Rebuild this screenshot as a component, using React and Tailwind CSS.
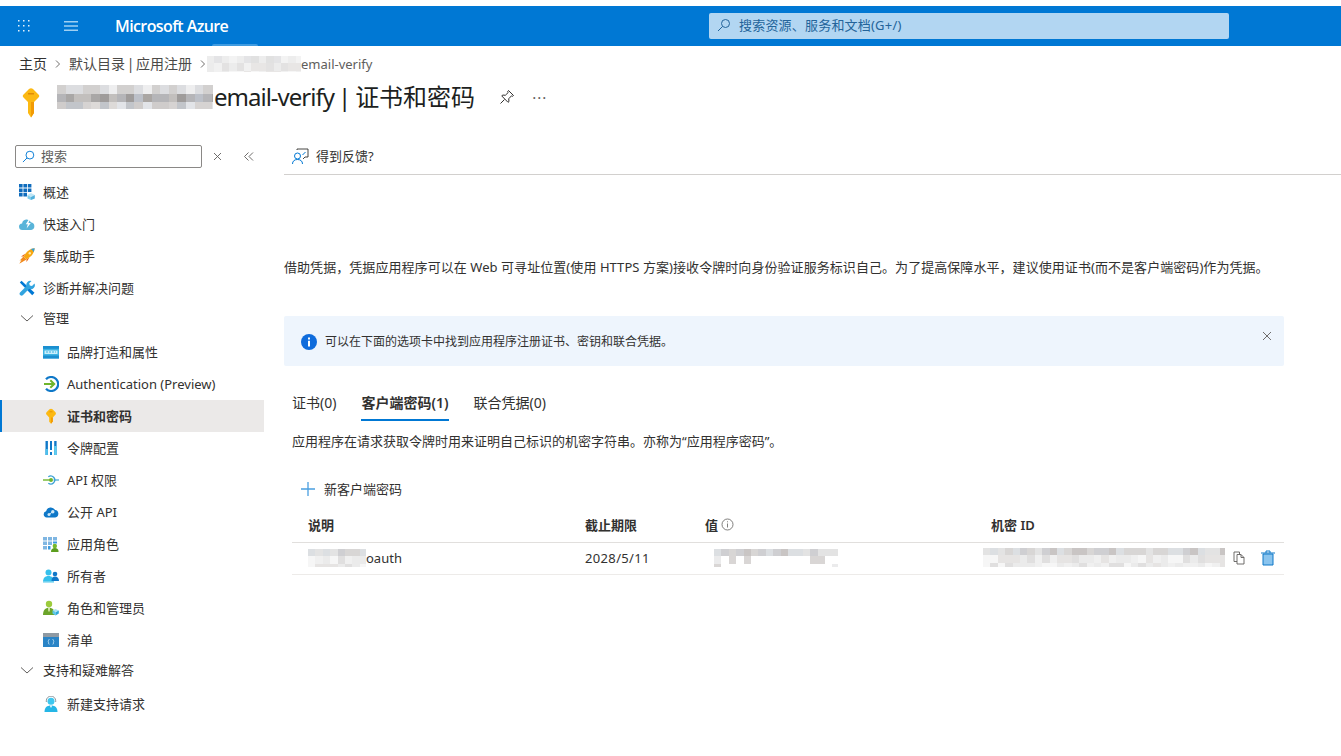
import React from "react";

const Mosaic = ({ w, h, cell = 7.4, rows, seed = 1, className = "" }) => {
  const cols = Math.ceil(w / cell);
  const nrows = Math.ceil(h / cell);
  const rects = [];
  let s = seed * 9301 + 49297;
  const next = () => {
    s = (s * 9301 + 49297) % 233280;
    return s / 233280;
  };
  for (let y = 0; y < nrows; y++) {
    const pal = rows[Math.min(y, rows.length - 1)];
    for (let x = 0; x < cols; x++) {
      rects.push(<rect key={`${x}-${y}`} x={x * cell} y={y * cell} width={cell + 0.3} height={cell + 0.3} fill={pal[Math.floor(next() * pal.length)]} />);
    }
  }
  return (
    <svg width={w} height={h} viewBox={`0 0 ${w} ${h}`} className={`shrink-0 ${className}`} shapeRendering="crispEdges">
      {rects}
    </svg>
  );
};

const light = ["#e6e6e6", "#ececec", "#dedede", "#f2f2f2", "#e2e2e4"];
const mid = ["#d8d6d5", "#cfcfd2", "#e3e3e3", "#c9c5c4", "#dcdfe2"];
const pale = ["#f0f0f0", "#e6e4e3", "#f6f6f6", "#ebebeb", "#e0dfdf"];
const dark = ["#a9a7a6", "#b5b5b8", "#9f9c9b", "#bcc0c8", "#aaa6a3", "#c2bfbd"];
const dark2 = ["#d6d3d2", "#c2c5ca", "#e2e4e8", "#cfcccb", "#dddad8"];

const Ic = ({ children, s = 16 }) => (
  <svg width={s} height={s} viewBox="0 0 16 16" className="shrink-0">{children}</svg>
);

const icons = {
  overview: (
    <Ic>
      <path d="M0 0h3.600v3.600H0zM4.400 0H8v3.600H4.400zM8.800 0h3.600v3.600H8.800zM0 4.400h3.600V8H0zM4.400 4.400H8V8H4.400zM8.800 4.400h3.600V8H8.800zM0 8.800h3.600v3.600H0zM4.400 8.800H8v3.600H4.400z" fill="#0f6cbd" />
      <path d="M8.500 11 12 9l3.800 2-3.800 2z" fill="#bfe6f6" />
      <path d="M8.500 11v3.400l3.500 1.600v-3z" fill="#7fcdec" />
      <path d="M15.800 11v3.400L12 16v-3z" fill="#50b0dc" />
    </Ic>
  ),
  quick: (
    <Ic>
      <path d="M3.600 14a3.300 3.300 0 0 1-.5-6.600A4.600 4.600 0 0 1 11.900 6.300a3.900 3.900 0 0 1 .3 7.700z" fill="#59b4d9" />
      <path d="M9.800 3.600 6.800 8.300h2l-1.200 4.200L11.800 7H9.400l1.400-3z" fill="#fff" />
    </Ic>
  ),
  rocket: (
    <Ic>
      <path d="M4.500 8.500 8 3.800C10 1.800 13 .5 15.700.3 15.500 3 14.200 6 12.200 8L7.500 11.500z" fill="#f7a711" />
      <path d="M11.500 1.100c1.400.6 2.600 1.800 3.200 3.200l1-4z" fill="#2f9ee0" />
      <path d="M2 8.500 6.500 5.500 4.500 8.500zM7.500 14 10.500 9.500 7.500 11.500z" fill="#e9620f" />
      <path d="M4.500 8.500 7.500 11.500.3 15.700 2.500 12 .5 12.800z" fill="#f28a1c" />
      <circle cx="10.800" cy="5.200" r="1.200" fill="#fde9a9" />
    </Ic>
  ),
  tools: (
    <Ic>
      <path d="M.8 2.500 2.500.8l13 12-2.300 2.500z" fill="#0078d4" />
      <path d="M15.500 3.500 13 6l-2.200-.6-.6-2.200L12.500.9a4 4 0 0 0-5 5L1 12.500A2 2 0 0 0 3.800 15.300L10.200 8.800a4 4 0 0 0 5.300-5.300z" fill="#32a4df" />
    </Ic>
  ),
  brand: (
    <Ic>
      <path d="M0 2h16v12.500H0z" fill="#3db4e3" />
      <path d="M0 2h16v2.800H0z" fill="#1a8fd0" />
      <path d="M0 11.500h16v3H0z" fill="#1a8fd0" />
      <path d="M1.500 6.500h13v3.500h-13z" fill="#c8eefb" />
      <path d="M3 8h10" stroke="#3db4e3" strokeWidth="1" strokeDasharray="2 1" />
    </Ic>
  ),
  auth: (
    <Ic>
      <path d="M3 3.300A7 7 0 1 1 3 12.700" fill="none" stroke="#0f78c8" strokeWidth="2.200" />
      <path d="M1 8h9.500" stroke="#6fb52c" strokeWidth="2" />
      <path d="M7.300 4.300 11.200 8l-3.900 3.700" fill="none" stroke="#6fb52c" strokeWidth="2" />
    </Ic>
  ),
  key: (
    <Ic>
      <path d="M6.500 1.200Q8 .2 9.500 1.200L12.500 4.200Q13.200 5.200 12.800 6.200L9.800 9.500V13.500L8 15.800 6.200 13.800V9.500L3.200 6.200Q2.800 5.200 3.500 4.200z" fill="#fcb913" />
      <path d="M8 9.500v6.300l1.800-2.300V9.500z" fill="#f29a05" />
      <path d="M6.500 3.300h3v1h-3z" fill="#e79304" />
    </Ic>
  ),
  token: (
    <Ic>
      <path d="M2.500 1h2.400v14H2.500z" fill="#0f78c8" />
      <path d="M2.500 9h2.400v6H2.500z" fill="#4fc1ec" />
      <path d="M7 1h2v9H7z" fill="#0f78c8" />
      <path d="M7 12h2v3H7z" fill="#0f78c8" />
      <path d="M11.200 1h2.400v14h-2.400z" fill="#0f78c8" />
      <path d="M11.200 6h2.400v9h-2.400z" fill="#5ed0f2" />
    </Ic>
  ),
  api: (
    <Ic>
      <path d="M0 8h7" stroke="#6fb52c" strokeWidth="1.400" />
      <path d="M10.500 8H16" stroke="#59b4d9" strokeWidth="1.400" />
      <path d="M5.300 4.800a4 4 0 1 1 0 6.400" fill="none" stroke="#3aa0d4" strokeWidth="1.300" />
      <circle cx="8" cy="8" r="2" fill="#6fb52c" />
    </Ic>
  ),
  expose: (
    <Ic>
      <path d="M3.700 13.500a3.200 3.200 0 0 1-.6-6.300A4.800 4.800 0 0 1 12 6a3.800 3.800 0 0 1 .3 7.500z" fill="#0f78c8" />
      <circle cx="6" cy="10.500" r="1.500" fill="#cfe8f7" />
      <circle cx="9.800" cy="7.700" r="1.700" fill="#cfe8f7" />
      <path d="M6 10.500l3.800-2.800" stroke="#cfe8f7" />
    </Ic>
  ),
  roles: (
    <Ic>
      <path d="M0 1h4v3.600H0zM5 1h4v3.600H5zM10 1h4v3.600h-4zM0 5.500h4v3.600H0zM5 5.500h4v3.600H5zM0 10h4v3.600H0z" fill="#7fb6e2" />
      <path d="M10 5.500h4v2h-4zM5 10h2.500v3.600H5z" fill="#3b9ade" />
      <circle cx="11.800" cy="10" r="2.200" fill="#76b82a" />
      <path d="M8 16c0-3 1.500-4 3.800-4s3.800 1 3.800 4z" fill="#5c9e1e" />
    </Ic>
  ),
  owners: (
    <Ic>
      <circle cx="5.500" cy="4.500" r="3" fill="#35c0ec" />
      <path d="M0 14c0-4 2-6 5.500-6s5.500 2 5.500 6z" fill="#35c0ec" />
      <path d="M0 13.500h11V15H0z" fill="#a6e2f5" />
      <circle cx="12" cy="6" r="2.300" fill="#0f78c8" />
      <path d="M8.500 13c0-3 1.200-4.500 3.500-4.500s4 1.500 4 4.500z" fill="#0f78c8" />
    </Ic>
  ),
  admins: (
    <Ic>
      <circle cx="6" cy="4" r="3.200" fill="#9ccb3c" />
      <path d="M0 15c0-5 2.400-7.300 6-7.300s6 2.300 6 7.300z" fill="#6ba42a" />
      <path d="M5 8h2l-.3 3.500H5.300z" fill="#d8e9b0" />
      <path d="M9.500 10.500 12.500 9l3.300 1.500-3.300 1.600z" fill="#a9e4f5" />
      <path d="M9.500 10.500v3l3 2v-3.300z" fill="#5ac8ea" />
      <path d="M15.800 10.500v3l-3.300 2v-3.300z" fill="#2ea9da" />
    </Ic>
  ),
  manifest: (
    <Ic>
      <path d="M0 1h16v4H0z" fill="#8f9aa3" />
      <path d="M0 5h16v10H0z" fill="#2a84c6" />
      <path d="M6.500 7.500c-1 0-1 .4-1 1.100v.7l-.5.500.5.500v.8c0 .7 0 1.100 1 1.100M9.500 7.500c1 0 1 .4 1 1.100v.7l.5.500-.5.500v.8c0 .7 0 1.100-1 1.100" fill="none" stroke="#cfe8f7" strokeWidth=".8" />
    </Ic>
  ),
  support: (
    <Ic>
      <path d="M1.500 16c0-4.500 2.400-6.500 6.500-6.500s6.500 2 6.500 6.500z" fill="#25b6e6" />
      <circle cx="8" cy="5.200" r="3.500" fill="#3ec7ef" />
      <path d="M3.300 6V4.800a4.700 4.700 0 0 1 9.400 0V6" fill="none" stroke="#8d979e" strokeWidth="1" />
      <path d="M6.800 9.500h2.400L8 12z" fill="#fff" />
    </Ic>
  ),
};

const Chevron = () => (
  <svg width="14" height="14" viewBox="0 0 14 14" className="shrink-0"><path d="M1 4.500 7 10l6-5.500" fill="none" stroke="#605e5c" strokeWidth="1" /></svg>
);

const Crumb = ({ className = "" }) => (
  <svg width="6" height="8" viewBox="0 0 6 8" className={`shrink-0 ${className}`}><path d="M1 .5 4.500 4 1 7.500" fill="none" stroke="#605e5c" strokeWidth=".9" /></svg>
);

const NavItem = ({ icon, label, sub, active }) => (
  <div className={`flex h-8 items-center gap-2 border-l-2 ${active ? "border-[#0078d4] bg-[#ebe9e8] font-semibold" : "border-transparent"} ${sub ? "pl-[41px]" : "pl-[17px]"}`}>
    {icons[icon]}
    <span>{label}</span>
  </div>
);

const Group = ({ label }) => (
  <div className="flex h-7 items-center gap-[9px] pl-[20px]">
    <Chevron />
    <span>{label}</span>
  </div>
);

export default function App() {
  return (
    <div className="h-[756px] w-[1341px] overflow-hidden bg-white pt-1.5 text-[13px] leading-5 text-[#323130] [font-family:'Noto_Sans','Noto_Sans_CJK_SC',sans-serif]">
      <header className="relative flex h-10 items-center bg-[#0078d4] text-white">
        <svg width="16" height="16" viewBox="0 0 16 16" className="ml-4 shrink-0" fill="#e3f1fb">
          <path d="M2 2h1.500v1.500H2zM7 2h1.500v1.500H7zM12 2h1.500v1.500H12zM2 7h1.500v1.500H2zM7 7h1.500v1.500H7zM12 7h1.500v1.500H12zM2 12h1.500v1.500H2zM7 12h1.500v1.500H7zM12 12h1.500v1.500H12z" />
        </svg>
        <svg width="16" height="12" viewBox="0 0 16 12" className="ml-[31px] shrink-0" fill="#9fd0f2">
          <path d="M1 1h14v1.400H1zM1 5.300h14v1.400H1zM1 9.600h14V11H1z" />
        </svg>
        <span className="ml-[36px] w-[594px] text-[16px] font-semibold tracking-[-0.6px] [font-family:'Open_Sans',sans-serif]">Microsoft Azure</span>
        <div className="flex h-[26px] w-[520px] items-center gap-[8px] rounded-[2px] bg-[#b2d6f2] pb-[2px] pl-2 text-[#23649a]">
          <svg width="14" height="14" viewBox="0 0 14 14" className="shrink-0"><circle cx="8.500" cy="5.500" r="4" fill="none" stroke="#23649a" /><path d="M5.500 8.500 1 13" stroke="#23649a" /></svg>
          <span className="tracking-[0.2px]">搜索资源、服务和文档(G+/)</span>
        </div>
        <div className="absolute bottom-0 left-[212px] h-[2px] w-[46px] rounded-t-sm bg-[#3f9be0]" />
      </header>

      <div className="flex h-[28px] items-end pl-[19px] text-[#4b4a48]">
        <div className="flex h-[20px] items-center">
          <span className="text-[14px] text-[#323130]">主页</span>
          <Crumb className="mx-[8px]" />
          <span className="text-[14px] [word-spacing:-2px]">默认目录 | 应用注册</span>
          <Crumb className="ml-[8px] mr-[1px]" />
          <Mosaic w={94} h={16} cell={7.400} rows={[light, pale]} seed={3} className="opacity-90" />
          <span className="text-[#605e5c]">email-verify</span>
        </div>
      </div>

      <div className="flex h-[44px] items-center pl-[22px] pt-[2px]">
        <svg width="18" height="30" viewBox="0 0 18 30" className="mt-[12px] shrink-0">
          <path d="M7 1Q9-.3 11 1L16.500 6.500Q18 8 16.500 9.500L12 14V25L9 29.500 6 25V14L1.500 9.500Q0 8 1.500 6.500z" fill="#fcb913" />
          <path d="M9 14V29.500L12 25V14z" fill="#f29a05" />
          <path d="M6 5h6v1.500H6z" fill="#e08b05" />
        </svg>
        <Mosaic w={156} h={24} cell={8.600} rows={[["#dcdde0", "#d2d0cf", "#eeeeef"], dark, dark2]} seed={7} className="ml-[17px]" />
        <h1 className="ml-[1px] flex text-[24px] font-normal leading-8 text-[#201f1e]">
          <span className="tracking-[-1px]">email-verify</span>
          <span className="ml-[4px]">|</span>
          <span className="ml-[4px]">证书和密码</span>
        </h1>
        <svg width="16" height="16" viewBox="0 0 16 16" className="ml-[24px] shrink-0">
          <path d="M9.500 1.500 14.500 6.500 13.500 7.300 12.500 6.800 9.700 9.800 10 12.500 9 13.300 2.800 7 3.600 6 6.300 6.300 9.200 3.500 8.700 2.500zM5.500 10.500 1.500 14.500" fill="none" stroke="#323130" strokeWidth="1" />
        </svg>
        <span className="ml-[17px] text-[15px] leading-none tracking-[1px] text-[#605e5c]">···</span>
      </div>

      <div className="mt-[27px] flex">
        <aside className="w-[284px] shrink-0 pr-[20px]">
          <div className="flex h-[23px] items-center pl-[15px]">
            <div className="flex h-[23px] w-[187px] items-center gap-[6px] rounded-[2px] border border-[#8a8886] pb-[1px] pl-[6px] text-[#605e5c]">
              <svg width="13" height="13" viewBox="0 0 14 14" className="shrink-0"><circle cx="8.500" cy="5.500" r="4.200" fill="none" stroke="#0078d4" /><path d="M5.500 8.500 1 13" stroke="#0078d4" /></svg>
              <span>搜索</span>
            </div>
            <svg width="9" height="9" viewBox="0 0 9 9" className="ml-[11px] shrink-0"><path d="M1 1l7 7M8 1 1 8" stroke="#605e5c" strokeWidth=".9" /></svg>
            <svg width="10" height="9" viewBox="0 0 10 9" className="ml-[22px] shrink-0"><path d="M4.500 .5.500 4.500l4 4M9 .5l-4 4 4 4" fill="none" stroke="#605e5c" strokeWidth=".9" /></svg>
          </div>
          <nav className="mt-[8px]">
            <NavItem icon="overview" label="概述" />
            <NavItem icon="quick" label="快速入门" />
            <NavItem icon="rocket" label="集成助手" />
            <NavItem icon="tools" label="诊断并解决问题" />
            <Group label="管理" />
            <div className="h-[4px]" />
            <NavItem sub icon="brand" label="品牌打造和属性" />
            <NavItem sub icon="auth" label="Authentication (Preview)" />
            <NavItem sub active icon="key" label="证书和密码" />
            <NavItem sub icon="token" label="令牌配置" />
            <NavItem sub icon="api" label="API 权限" />
            <NavItem sub icon="expose" label="公开 API" />
            <NavItem sub icon="roles" label="应用角色" />
            <NavItem sub icon="owners" label="所有者" />
            <NavItem sub icon="admins" label="角色和管理员" />
            <NavItem sub icon="manifest" label="清单" />
            <Group label="支持和疑难解答" />
            <div className="h-[4px]" />
            <NavItem sub icon="support" label="新建支持请求" />
          </nav>
        </aside>

        <main className="min-w-0 flex-1">
          <div className="-mt-[5px] flex h-[35px] items-center gap-[7px] border-b border-[#d2d0ce] pb-[2px] pl-[8px]">
            <svg width="17" height="17" viewBox="0 0 17 17" className="shrink-0" fill="none" stroke="#0078d4" strokeWidth="1">
              <circle cx="5.500" cy="8" r="3" />
              <path d="M.5 16c0-3 2-4.500 5-4.500s5 1.500 5 4.500" />
              <path d="M5 2V1h11v8h-3l-2 2" stroke="#323130" strokeWidth=".9" />
              <path d="M10.500 7l3-3" stroke="#0078d4" />
            </svg>
            <span>得到反馈?</span>
          </div>

          <div className="mr-[57px]">
            <p className="mt-[82px] whitespace-nowrap tracking-[0.06px]">借助凭据，凭据应用程序可以在 Web 可寻址位置(使用 HTTPS 方案)接收令牌时向身份验证服务标识自己。为了提高保障水平，建议使用证书(而不是客户端密码)作为凭据。</p>

            <div className="mt-[39px] flex h-[50px] items-center rounded-[2px] bg-[#eef5fd] pl-[17px] pr-[12px] text-[12px]">
              <svg width="16" height="16" viewBox="0 0 16 16" className="mt-[1px] shrink-0"><circle cx="8" cy="8" r="8" fill="#0f6cdc" /><path d="M7 6.800h2V12.500H7zM7 3.500h2v2H7z" fill="#fff" /></svg>
              <span className="ml-[8px] mt-[1px]">可以在下面的选项卡中找到应用程序注册证书、密钥和联合凭据。</span>
              <svg width="10" height="10" viewBox="0 0 10 10" className="mb-[10px] ml-auto shrink-0"><path d="M1 1l8 8M9 1 1 9" stroke="#605e5c" strokeWidth=".9" /></svg>
            </div>

            <div className="ml-[8px] mt-[27px]">
              <div className="flex h-[28px] items-start text-[14px]">
                <span className="h-full">证书(0)</span>
                <span className="ml-[25px] h-full border-b-2 border-[#0078d4] font-semibold">客户端密码(1)</span>
                <span className="ml-[25px] h-full">联合凭据(0)</span>
              </div>
              <p className="mt-[10px]">应用程序在请求获取令牌时用来证明自己标识的机密字符串。亦称为“应用程序密码”。</p>

              <div className="mt-[28px] flex h-[20px] items-center gap-[8px] pl-[8px]">
                <svg width="16" height="16" viewBox="0 0 16 16" className="shrink-0"><path d="M8 1v14M1 8h14" stroke="#4a9fe0" strokeWidth="1.300" /></svg>
                <span>新客户端密码</span>
              </div>

              <div className="mt-[16px] grid h-[28px] grid-cols-[277px_120px_286px_1fr] items-center border-b border-[#e1dfdd] pb-[11px] pl-[16px] font-semibold">
                <span>说明</span>
                <span>截止期限</span>
                <span className="flex items-center gap-[3px]">
                  值
                  <svg width="13" height="13" viewBox="0 0 13 13" className="mb-[2px] shrink-0" fill="none" stroke="#605e5c" strokeWidth=".8"><circle cx="6.500" cy="6.500" r="5.500" /><path d="M6.500 5.500v4M6.500 3.300v1" /></svg>
                </span>
                <span>机密 ID</span>
              </div>
              <div className="grid h-[32px] grid-cols-[277px_120px_278px_1fr] items-center border-b border-[#edebe9] pb-[2px] pl-[16px]">
                <span className="flex items-center">
                  <Mosaic w={58} h={18} cell={7.400} rows={[mid, pale]} seed={5} />
                  <span>oauth</span>
                </span>
                <span className="tracking-[0.35px]">2028/5/11</span>
                <Mosaic w={124} h={18} cell={7.400} rows={[mid, ["#d9d6d5", "#ebebec", "#ffffff", "#ffffff", "#ffffff", "#ffffff", "#ffffff"]]} seed={11} className="ml-[9px]" />
                <span className="flex items-center">
                  <Mosaic w={242} h={19} cell={7.400} rows={[mid, pale]} seed={13} />
                  <svg width="12" height="14" viewBox="0 0 12 14" className="ml-[8px] shrink-0" fill="none" stroke="#605e5c" strokeWidth=".9"><path d="M1 1h5.500v2.500M1 1v9.500h3" /><path d="M4 3.500h4l3 3v6.500H4zM8 3.500v3h3" /></svg>
                  <svg width="14" height="16" viewBox="0 0 14 16" className="ml-[16px] shrink-0"><path d="M2 4h10v11H2z" fill="#8ac4ee" stroke="#0f78c8" /><path d="M0 3h14M5 3V1h4v2" fill="none" stroke="#0f78c8" /></svg>
                </span>
              </div>
            </div>
          </div>
        </main>
      </div>
    </div>
  );
}
